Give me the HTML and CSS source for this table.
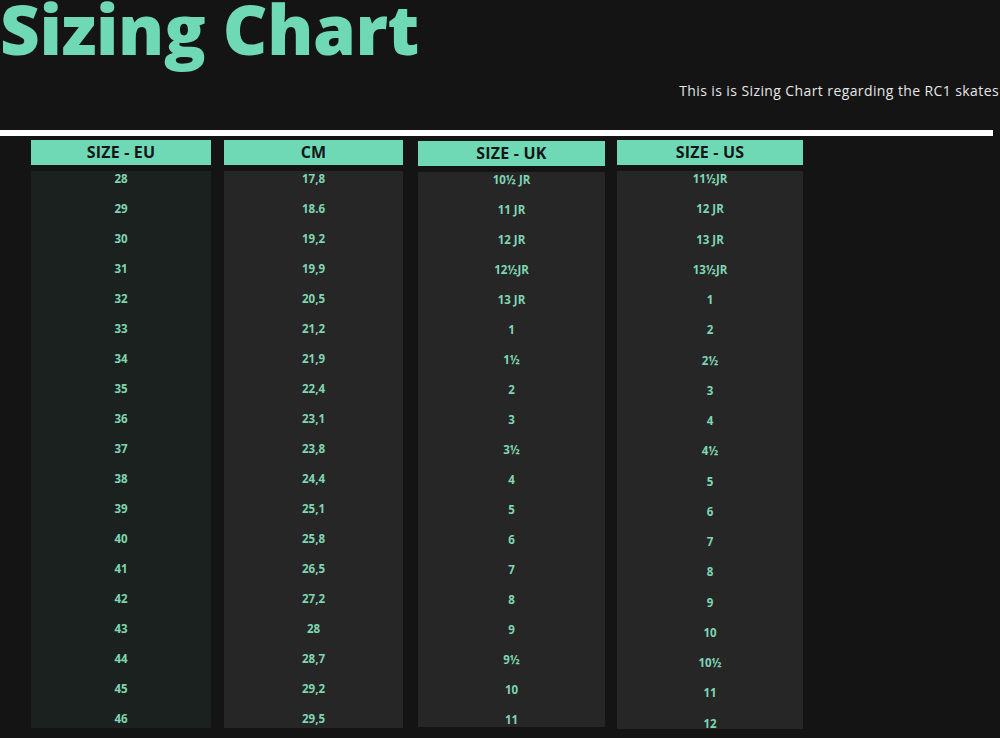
FILE: index.html
```html
<!DOCTYPE html>
<html>
<head>
<meta charset="utf-8">
<link rel="stylesheet" href="styles.css">
</head>
<body>
<div class="page">
  <h1 class="title">Sizing Chart</h1>
  <p class="subtitle">This is is Sizing Chart regarding the RC1 skates</p>
  <div class="rule"></div>
  <div class="chart">
    <div class="col c1">
      <div class="head">SIZE - EU</div>
      <div class="body tint">
        <div class="cell">28</div><div class="cell">29</div><div class="cell">30</div><div class="cell">31</div><div class="cell">32</div><div class="cell">33</div><div class="cell">34</div><div class="cell">35</div><div class="cell">36</div><div class="cell">37</div><div class="cell">38</div><div class="cell">39</div><div class="cell">40</div><div class="cell">41</div><div class="cell">42</div><div class="cell">43</div><div class="cell">44</div><div class="cell">45</div><div class="cell">46</div>
      </div>
    </div>
    <div class="col c2">
      <div class="head">CM</div>
      <div class="body">
        <div class="cell">17,8</div><div class="cell">18.6</div><div class="cell">19,2</div><div class="cell">19,9</div><div class="cell">20,5</div><div class="cell">21,2</div><div class="cell">21,9</div><div class="cell">22,4</div><div class="cell">23,1</div><div class="cell">23,8</div><div class="cell">24,4</div><div class="cell">25,1</div><div class="cell">25,8</div><div class="cell">26,5</div><div class="cell">27,2</div><div class="cell">28</div><div class="cell">28,7</div><div class="cell">29,2</div><div class="cell">29,5</div>
      </div>
    </div>
    <div class="col c3">
      <div class="head">SIZE - UK</div>
      <div class="body">
        <div class="cell">10½ JR</div><div class="cell">11 JR</div><div class="cell">12 JR</div><div class="cell">12½JR</div><div class="cell">13 JR</div><div class="cell">1</div><div class="cell">1½</div><div class="cell">2</div><div class="cell">3</div><div class="cell">3½</div><div class="cell">4</div><div class="cell">5</div><div class="cell">6</div><div class="cell">7</div><div class="cell">8</div><div class="cell">9</div><div class="cell">9½</div><div class="cell">10</div><div class="cell">11</div>
      </div>
    </div>
    <div class="col c4">
      <div class="head">SIZE - US</div>
      <div class="body wide">
        <div class="cell">11½JR</div><div class="cell">12 JR</div><div class="cell">13 JR</div><div class="cell">13½JR</div><div class="cell">1</div><div class="cell">2</div><div class="cell">2½</div><div class="cell">3</div><div class="cell">4</div><div class="cell">4½</div><div class="cell">5</div><div class="cell">6</div><div class="cell">7</div><div class="cell">8</div><div class="cell">9</div><div class="cell">10</div><div class="cell">10½</div><div class="cell">11</div><div class="cell">12</div>
      </div>
    </div>
  </div>
</div>
</body>
</html>
```
FILE: styles.css
```css
html, body {
  margin: 0;
  padding: 0;
  background: #141414;
}
.page {
  width: 1000px;
  height: 738px;
  overflow: hidden;
  font-family: "Open Sans", "Liberation Sans", sans-serif;
}
.title {
  margin: 0;
  font-size: 69px;
  font-weight: 800;
  line-height: 56px;
  padding-bottom: 16px;
  color: #6fd9b6;
  letter-spacing: -0.4px;
}
.subtitle {
  margin: 8px 1px 0 0;
  text-align: right;
  font-size: 14px;
  line-height: 22px;
  color: #e6e6e6;
  letter-spacing: 0.4px;
}
.rule {
  margin-top: 28px;
  width: 993px;
  height: 6px;
  background: #ffffff;
}
.chart {
  display: flex;
  margin-top: 4px;
  padding-left: 31px;
}
.col {
  display: flex;
  flex-direction: column;
  gap: 6px;
}
.c1 { width: 180px; }
.c2 { width: 179px; margin-left: 13px; }
.c3 { width: 187px; margin-left: 15px; margin-top: 1px; }
.c4 { width: 186px; margin-left: 12px; }
.head {
  height: 25px;
  background: #6fd9b6;
  color: #161616;
  font-weight: 700;
  font-size: 16px;
  line-height: 25px;
  text-align: center;
  letter-spacing: 0.2px;
}
.body {
  background: #262626;
  height: 557px;
  display: flex;
  flex-direction: column;
  overflow: hidden;
}
.body.tint { background: #1b211f; }
.c3 .body { height: 555px; }
.cell {
  flex: 0 0 30px;
  line-height: 16px;
  text-align: center;
  font-size: 11.5px;
  font-weight: 700;
  color: #7fd5b3;
}
.body.wide { padding-top: 1px; }
.body.wide .cell { flex-basis: 30.25px; line-height: 14px; }
```
